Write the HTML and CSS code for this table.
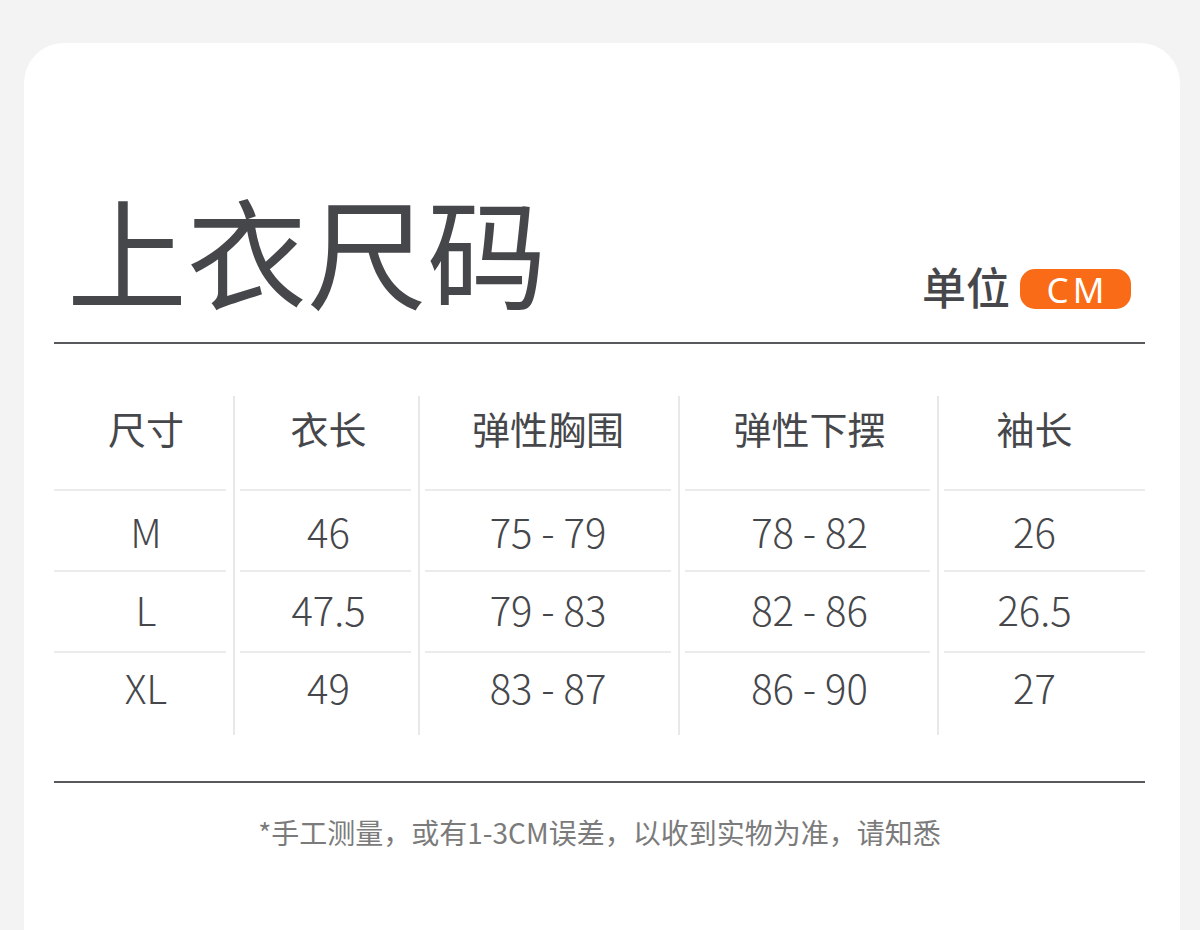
FILE: index.html
```html
<!DOCTYPE html>
<html lang="zh-CN">
<head>
<meta charset="utf-8">
<title>上衣尺码</title>
<link rel="stylesheet" href="styles.css">
</head>
<body>
<div class="card">
  <header class="head">
    <h1 class="title">上衣尺码</h1>
    <div class="unit"><span class="unit-label">单位</span><span class="badge">CM</span></div>
  </header>
  <div class="rule"></div>
  <div class="table">
    <div class="col c1">
      <div class="th">尺寸</div>
      <div class="td">M</div>
      <div class="td">L</div>
      <div class="td">XL</div>
    </div>
    <div class="col c2">
      <div class="th">衣长</div>
      <div class="td">46</div>
      <div class="td">47.5</div>
      <div class="td">49</div>
    </div>
    <div class="col c3">
      <div class="th">弹性胸围</div>
      <div class="td">75 - 79</div>
      <div class="td">79 - 83</div>
      <div class="td">83 - 87</div>
    </div>
    <div class="col c4">
      <div class="th">弹性下摆</div>
      <div class="td">78 - 82</div>
      <div class="td">82 - 86</div>
      <div class="td">86 - 90</div>
    </div>
    <div class="col c5">
      <div class="th">袖长</div>
      <div class="td">26</div>
      <div class="td">26.5</div>
      <div class="td">27</div>
    </div>
  </div>
  <div class="rule rule-bottom"></div>
  <p class="note">*手工测量，或有1-3CM误差，以收到实物为准，请知悉</p>
</div>
</body>
</html>
```

FILE: styles.css
```css
* { box-sizing: border-box; }
html, body { margin: 0; padding: 0; }
body {
  background: #f3f3f3;
  font-family: "Noto Sans CJK SC", "Noto Sans", sans-serif;
  color: #46474b;
  height: 930px;
  overflow: hidden;
}
.card {
  margin: 43px 20px 0 24px;
  background: #fff;
  border-radius: 40px 40px 0 0;
  padding: 0 35px 0 30px;
  height: 900px;
}
.head {
  display: flex;
  align-items: flex-end;
  justify-content: space-between;
  padding-top: 146px;
  margin-bottom: 33px;
}
.title {
  margin: 0 0 0 13px;
  font-size: 120px;
  line-height: 120px;
  font-weight: 400;
  color: #46474b;
}
.unit {
  display: flex;
  align-items: center;
  height: 40px;
  margin-right: 14px;
}
.unit-label {
  font-size: 44px;
  line-height: 40px;
  font-weight: 500;
  margin-right: 10px;
  position: relative;
  top: -3px;
}
.badge {
  display: inline-flex;
  align-items: center;
  justify-content: center;
  width: 111px;
  height: 40px;
  border-radius: 15px;
  background: #f96b16;
  color: #fff;
  font-family: "Noto Sans", sans-serif;
  font-size: 35px;
  letter-spacing: 4px;
  padding-left: 4px;
  font-weight: 400;
}
.rule {
  height: 2px;
  background: #58595c;
}
.table {
  display: grid;
  grid-template-columns: 179px 185px 260px 259px 208px;
  margin-top: 52px;
}
.col {
  display: flex;
  flex-direction: column;
  padding: 0 7px 0 5px;
  border-left: 2px solid #e8e8e8;
}
.c1 { border-left: 0; padding: 0 7px 0 0; }
.c5 { padding: 0 0 0 5px; }
.th {
  height: 93px;
  line-height: 63px;
  text-align: center;
  font-size: 38px;
  font-weight: 400;
}
.td {
  height: 81px;
  border-top: 2px solid #ebebeb;
  display: flex;
  align-items: center;
  justify-content: center;
  font-size: 40px;
  font-weight: 300;
  line-height: 1;
}
.td:nth-child(3) { padding-bottom: 6px; }
.td:nth-child(4) { height: 84px; padding-bottom: 14px; }
.c1 .th, .c1 .td { padding-left: 12px; }
.c2 .th, .c2 .td { padding-left: 6px; }
.c4 .th, .c4 .td { padding-left: 4px; }
.c5 .th, .c5 .td { padding-right: 20px; }
.rule-bottom { margin-top: 46px; }
.note {
  margin: 29px 0 0;
  text-align: center;
  font-size: 28px;
  line-height: 40px;
  color: #7b7b7b;
  font-weight: 400;
}
```
